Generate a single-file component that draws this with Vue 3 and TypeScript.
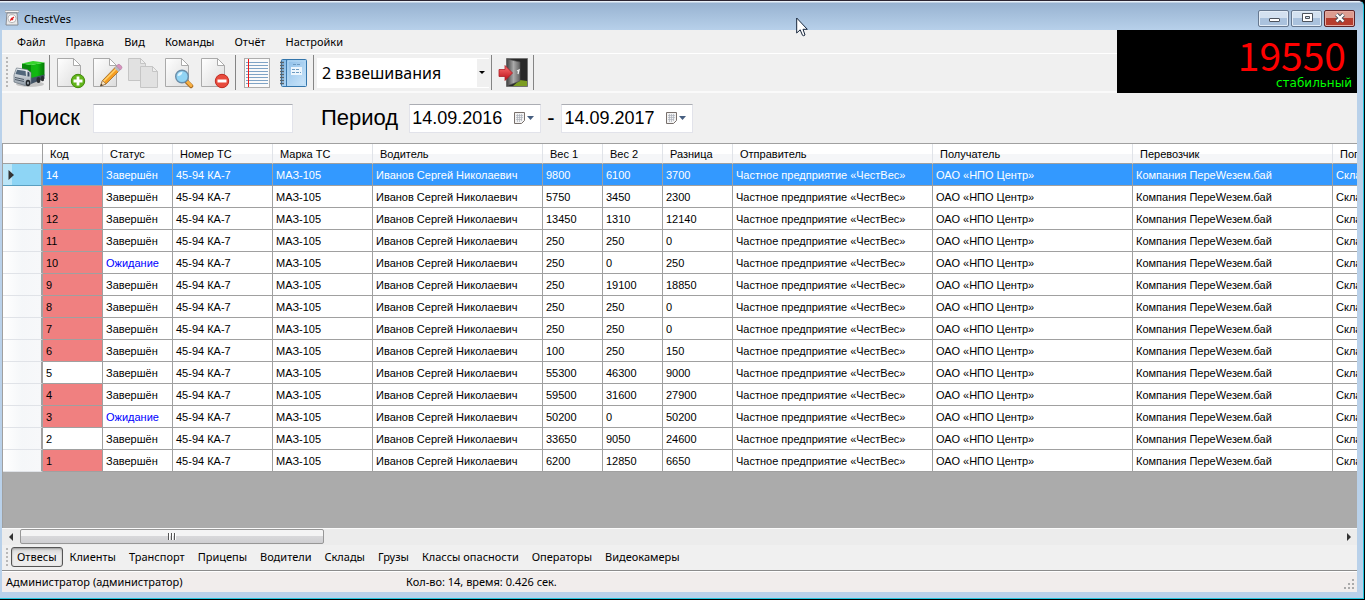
<script setup lang="ts">
import { ref } from 'vue'

interface Weighing {
  id: number
  status: string
  first: number
  second: number
  diff: number
  flagged: boolean
}

const menu = ['Файл', 'Правка', 'Вид', 'Команды', 'Отчёт', 'Настройки']
const columns = [
  'Код', 'Статус', 'Номер ТС', 'Марка ТС', 'Водитель', 'Вес 1', 'Вес 2',
  'Разница', 'Отправитель', 'Получатель', 'Перевозчик', 'Погрузка',
]
const tabs = [
  'Отвесы', 'Клиенты', 'Транспорт', 'Прицепы', 'Водители', 'Склады',
  'Грузы', 'Классы опасности', 'Операторы', 'Видеокамеры',
]

const done = 'Завершён'
const waiting = 'Ожидание'
const rows: Weighing[] = [
  { id: 14, status: done, first: 9800, second: 6100, diff: 3700, flagged: false },
  { id: 13, status: done, first: 5750, second: 3450, diff: 2300, flagged: true },
  { id: 12, status: done, first: 13450, second: 1310, diff: 12140, flagged: true },
  { id: 11, status: done, first: 250, second: 250, diff: 0, flagged: true },
  { id: 10, status: waiting, first: 250, second: 0, diff: 250, flagged: true },
  { id: 9, status: done, first: 250, second: 19100, diff: 18850, flagged: true },
  { id: 8, status: done, first: 250, second: 250, diff: 0, flagged: true },
  { id: 7, status: done, first: 250, second: 250, diff: 0, flagged: true },
  { id: 6, status: done, first: 100, second: 250, diff: 150, flagged: true },
  { id: 5, status: done, first: 55300, second: 46300, diff: 9000, flagged: false },
  { id: 4, status: done, first: 59500, second: 31600, diff: 27900, flagged: true },
  { id: 3, status: waiting, first: 50200, second: 0, diff: 50200, flagged: true },
  { id: 2, status: done, first: 33650, second: 9050, diff: 24600, flagged: false },
  { id: 1, status: done, first: 6200, second: 12850, diff: 6650, flagged: true },
]

const selected = ref(14)
const activeTab = ref('Отвесы')
const query = ref('')
const dateFrom = ref('14.09.2016')
const dateTo = ref('14.09.2017')
const mode = ref('2 взвешивания')
</script>

<template>
  <div class="window">
    <header class="titlebar">
      <svg class="app-icon" viewBox="0 0 14 16" aria-hidden="true">
        <path d="M0 .5h14v2H0z" fill="#f4f4f4" stroke="#8a8f96" stroke-width=".6" />
        <path d="M2 3h10l1 12H1z" fill="#e9e9ea" stroke="#77797d" stroke-width=".8" />
        <circle cx="7" cy="8.7" r="4" fill="#fff" stroke="#999" stroke-width=".7" />
        <path d="m5.2 10.6 3.6-3.6M6 8l2 2" stroke="#e02020" stroke-width="1.4" />
      </svg>
      <span class="title">ChestVes</span>
      <div class="window-buttons">
        <button type="button" aria-label="Свернуть">
          <svg viewBox="0 0 14 12"><rect x="2.5" y="6.5" width="10" height="3" rx=".5" fill="#fff" stroke="#4c535d" /></svg>
        </button>
        <button type="button" aria-label="Развернуть">
          <svg viewBox="0 0 14 12"><path d="M2.5 1.5h10v8h-10zM5.500 4.500v2h4v-2z" fill="#fff" fill-rule="evenodd" stroke="#4c535d" /></svg>
        </button>
        <button type="button" class="close" aria-label="Закрыть">
          <svg viewBox="0 0 14 12"><path d="m3.500 2.500 7 7m0-7-7 7" stroke="#4c535d" stroke-width="4" /><path d="m3.500 2.500 7 7m0-7-7 7" stroke="#fff" stroke-width="2.300" /></svg>
        </button>
      </div>
    </header>

    <div class="client">
      <div class="top">
        <div class="commands">
          <nav class="menu">
            <button v-for="item in menu" :key="item" type="button">{{ item }}</button>
          </nav>
          <div class="toolbar">
            <span class="grip"></span>
            <button type="button" class="tool" aria-label="Взвешивание">
              <svg viewBox="0 0 32 32">
                <defs>
                  <linearGradient id="cargo" x2="1"><stop stop-color="#12b312" /><stop offset=".45" stop-color="#10bb10" /><stop offset="1" stop-color="#057a08" /></linearGradient>
                  <linearGradient id="cab" y2="1" x2="0"><stop stop-color="#f7fafc" /><stop offset="1" stop-color="#8f9aa5" /></linearGradient>
                </defs>
                <ellipse cx="17" cy="27" rx="14" ry="3" fill="#000" opacity=".18" />
                <path d="M9 6.500 18 8v15l-9-4z" fill="#078a0a" />
                <path d="m18 8 13.500-2.500v13L18 23z" fill="url(#cargo)" />
                <path d="m9 6.500 11-2.500 11.500 1.500L18 8z" fill="#35d42c" />
                <path d="M18 23v-2l13.500-3.500v4L18 27z" fill="#405264" />
                <path d="m1 18 2.500-7L14 12.500l4 3V27l-6 1.500L1 25z" fill="url(#cab)" stroke="#65717d" stroke-width=".7" />
                <path d="m2.500 17 1.600-4.300 8.500 1.200.4 5z" fill="#52677b" />
                <path d="m14.500 14.500 2 1v4h-2z" fill="#364b61" />
                <path d="m2 20.500 9 2m-9 0 9 2" stroke="#4d5966" />
                <ellipse cx="15" cy="26" rx="2.300" ry="3.200" fill="#23272b" /><ellipse cx="15" cy="26" rx=".9" ry="1.500" fill="#aab2b9" />
                <ellipse cx="25.500" cy="23" rx="2" ry="3" fill="#292d31" /><ellipse cx="29.500" cy="21.500" rx="1.700" ry="2.700" fill="#292d31" />
              </svg>
            </button>
            <span class="separator"></span>
            <button type="button" class="tool" aria-label="Добавить">
              <svg viewBox="0 0 32 32">
                <defs>
                  <linearGradient id="paper" x2="1" y2="1"><stop stop-color="#fff" /><stop offset="1" stop-color="#dcdcdc" /></linearGradient>
                </defs>
                <path d="M2.500 1.500h16l7 7v21h-23z" fill="url(#paper)" stroke="#aaa" />
                <path d="M18.500 1.500v7h7z" fill="#fff" stroke="#aaa" />
                <circle cx="23" cy="24" r="6.700" fill="#62b51b" stroke="#438a0d" />
                <path d="M23 19.500v9M18.500 24h9" stroke="#fff" stroke-width="2.800" />
              </svg>
            </button>
            <button type="button" class="tool" aria-label="Изменить">
              <svg viewBox="0 0 32 32">
                <path d="M2.500 1.500h16l7 7v21h-23z" fill="url(#paper)" stroke="#aaa" />
                <path d="M18.500 1.500v7h7z" fill="#fff" stroke="#aaa" />
                <path d="m9.500 29 2-5.500L25 9.500l4 3.500-14 14z" fill="#f59d22" stroke="#9b6824" stroke-width=".8" />
                <path d="m12.500 24.500 13-13" stroke="#ffd36f" stroke-width="1.500" />
                <path d="m9.500 29 2-5.500 3.500 3.500z" fill="#f5dfba" stroke="#866646" stroke-width=".6" />
                <path d="m9.500 29 .8-2.200 1.400 1.400z" fill="#333" />
                <path d="m23.500 11 2-2 4 4-2 2z" fill="#b5bac4" />
                <path d="m25.500 9 1.300-1.400q1.200-.8 2.500.4l1 1q1.300 1.500.3 2.500L29.500 13z" fill="#d893bd" stroke="#a46e99" stroke-width=".5" />
              </svg>
            </button>
            <button type="button" class="tool" aria-label="Копировать" disabled>
              <svg viewBox="0 0 32 32" fill="#e1e1e1" stroke="#c5c5c5">
                <path d="M1.500 1.500h12l5 5v17h-17z" /><path d="M13.500 1.500v5h5z" fill="#eee" />
                <path d="M13.500 9.500h12l5 5v16h-17z" /><path d="M25.500 9.500v5h5z" fill="#eee" />
              </svg>
            </button>
            <button type="button" class="tool" aria-label="Просмотр">
              <svg viewBox="0 0 32 32">
                <path d="M2.500 1.500h16l7 7v21h-23z" fill="url(#paper)" stroke="#aaa" />
                <path d="M18.500 1.500v7h7z" fill="#fff" stroke="#aaa" />
                <path d="m24 25 4 4" stroke="#a96b20" stroke-width="4.500" stroke-linecap="round" /><path d="m24.500 25 3.500 3.500" stroke="#f8b042" stroke-width="3" stroke-linecap="round" />
                <circle cx="19" cy="19.500" r="6.300" fill="#91d4f4" stroke="#6a8da8" stroke-width="1.400" />
                <path d="M14.500 19q.5-4 5-4.300Q19 19 14.500 19z" fill="#def5ff" />
              </svg>
            </button>
            <button type="button" class="tool" aria-label="Удалить">
              <svg viewBox="0 0 32 32">
                <path d="M2.500 1.500h16l7 7v21h-23z" fill="url(#paper)" stroke="#aaa" />
                <path d="M18.500 1.500v7h7z" fill="#fff" stroke="#aaa" />
                <circle cx="23" cy="24" r="6.700" fill="#e84b3d" stroke="#c02b22" />
                <path d="M18.500 24h9" stroke="#fff" stroke-width="3" />
              </svg>
            </button>
            <span class="separator"></span>
            <button type="button" class="tool" aria-label="Журнал">
              <svg viewBox="0 0 32 32">
                <rect x="3.500" y="1.500" width="25" height="29" fill="#fafafa" stroke="#adadad" />
                <path d="M5 5.500h22M5 8.500h22M5 11.500h22M5 14.500h22M5 17.500h22M5 20.500h22M5 23.500h22M5 26.500h22" stroke="#7fa3c5" />
                <path d="M7.500 2v28" stroke="#f01515" />
              </svg>
            </button>
            <button type="button" class="tool" aria-label="Справочник">
              <svg viewBox="0 0 32 32">
                <defs><linearGradient id="book" x2="1" y2="1"><stop stop-color="#82b8e6" /><stop offset="1" stop-color="#d0e8fb" /></linearGradient></defs>
                <rect x="4.500" y="2.500" width="25" height="27" rx="1" fill="url(#book)" stroke="#3375ab" />
                <path d="M9.500 3v26" stroke="#3b79ae" /><path d="M11 4h17v24H11z" fill="none" stroke="#b6daf5" />
                <path d="M14 10h11v8H14z" fill="#edf6fd" />
                <path d="M16 7.500h7M15 12.500h8M15 15.500h9" stroke="#6c9ac1" stroke-dasharray="3 1" />
                <path d="M3 5.500h4M3 8.500h4M3 11.500h4M3 14.500h4M3 17.500h4M3 20.500h4M3 23.500h4M3 26.500h4" stroke="#59636b" stroke-width="1.400" />
              </svg>
            </button>
            <span class="separator"></span>
            <span class="combo">
              <select v-model="mode" aria-label="Режим взвешивания">
                <option>2 взвешивания</option>
                <option>1 взвешивание</option>
              </select>
            </span>
            <span class="separator"></span>
            <button type="button" class="tool" aria-label="Выход">
              <svg viewBox="0 0 32 32">
                <defs>
                  <linearGradient id="door" x2="1"><stop stop-color="#444" /><stop offset=".5" stop-color="#aaa" /><stop offset="1" stop-color="#626262" /></linearGradient>
                  <linearGradient id="arrow" y2="1" x2="0"><stop stop-color="#ff7474" /><stop offset="1" stop-color="#b80d16" /></linearGradient>
                </defs>
                <path d="M9.500 1.500h21v28h-21z" fill="#292929" stroke="#747474" />
                <path d="m16 29 7-6 7 1v5z" fill="#7c9d22" />
                <path d="m10 2 13 3v19l-13 5z" fill="url(#door)" stroke="#555" stroke-width=".6" />
                <path d="m20 14 2-1-1 4" fill="none" stroke="#eee" stroke-width="1.300" />
                <path d="M2 12.500h6V8.500l7.500 7.500L8 23.500v-4H2z" fill="url(#arrow)" stroke="#ad2027" stroke-width=".8" />
              </svg>
            </button>
            <span class="separator"></span>
          </div>
        </div>
        <output class="scale">
          <span class="weight">19550</span>
          <span class="state">стабильный</span>
        </output>
      </div>

      <form class="filters" @submit.prevent>
        <label for="search">Поиск</label>
        <input id="search" v-model="query" class="search" type="text">
        <label for="from">Период</label>
        <span class="date">
          <input id="from" v-model="dateFrom" type="text">
          <button type="button" aria-label="Выбрать начало периода">
            <svg viewBox="0 0 20 12"><path d="M.5.5h10v8l-3 3h-7z" fill="#f2f2f2" stroke="#776f6b" /><path d="M2 3.500h7M2 5.500h7M2 7.500h6M3.500 2v8M5.500 2v8M7.500 2v7" stroke="#aab0ba" stroke-width=".7" /><path d="M13 4h7l-3.500 4z" fill="#465e80" /></svg>
          </button>
        </span>
        <span class="dash">-</span>
        <span class="date">
          <input v-model="dateTo" type="text" aria-label="Конец периода">
          <button type="button" aria-label="Выбрать конец периода">
            <svg viewBox="0 0 20 12"><path d="M.5.5h10v8l-3 3h-7z" fill="#f2f2f2" stroke="#776f6b" /><path d="M2 3.500h7M2 5.500h7M2 7.500h6M3.500 2v8M5.500 2v8M7.500 2v7" stroke="#aab0ba" stroke-width=".7" /><path d="M13 4h7l-3.500 4z" fill="#465e80" /></svg>
          </button>
        </span>
      </form>

      <main class="grid">
        <table>
          <colgroup>
            <col class="w-head"><col class="w-small"><col class="w-status"><col class="w-medium"><col class="w-medium">
            <col class="w-driver"><col class="w-small"><col class="w-small"><col class="w-status">
            <col class="w-wide"><col class="w-wide"><col class="w-wide"><col class="w-wide">
          </colgroup>
          <thead>
            <tr>
              <th aria-label="Строка"></th>
              <th v-for="column in columns" :key="column" scope="col">{{ column }}</th>
            </tr>
          </thead>
          <tbody>
            <tr v-for="row in rows" :key="row.id" :class="{ selected: row.id === selected }" @click="selected = row.id">
              <th scope="row">
                <svg v-if="row.id === selected" viewBox="0 0 6 10" aria-label="Текущая строка"><path d="M.5 0 6 5 .5 10z" fill="#333" /></svg>
              </th>
              <td :class="{ flagged: row.flagged }">{{ row.id }}</td>
              <td :class="{ waiting: row.status === waiting }">{{ row.status }}</td>
              <td>45-94 КА-7</td>
              <td>МАЗ-105</td>
              <td>Иванов Сергей Николаевич</td>
              <td>{{ row.first }}</td>
              <td>{{ row.second }}</td>
              <td>{{ row.diff }}</td>
              <td>Частное предприятие «ЧестВес»</td>
              <td>ОАО «НПО Центр»</td>
              <td>Компания ПереWезем.бай</td>
              <td>Склад</td>
            </tr>
          </tbody>
        </table>
      </main>

      <div class="scrollbar">
        <button type="button" aria-label="Влево"><svg viewBox="0 0 4 8"><path d="M4 0v8L0 4z" fill="#333" /></svg></button>
        <div class="track"><div class="thumb"><i></i><i></i><i></i></div></div>
        <button type="button" aria-label="Вправо"><svg viewBox="0 0 4 8"><path d="M0 0v8l4-4z" fill="#333" /></svg></button>
      </div>

      <nav class="tabs">
        <span class="grip"></span>
        <button v-for="tab in tabs" :key="tab" type="button" :class="{ active: tab === activeTab }" @click="activeTab = tab">{{ tab }}</button>
      </nav>

      <footer class="status">
        <span class="user">Администратор (администратор)</span>
        <span>Кол-во: 14, время: 0.426 сек.</span>
        <svg class="resize" viewBox="0 0 11 11" fill="#aaa"><path d="M8 0h2v2H8zM8 4h2v2H8zM8 8h2v2H8zM4 4h2v2H4zM4 8h2v2H4zM0 8h2v2H0z" /></svg>
      </footer>
    </div>

    <svg class="pointer" viewBox="0 0 12 20" aria-hidden="true"><path d="M.7 1v15l3.500-3.200 2.300 5.500q1 1 2.500-.3L7 12.300h4.300z" fill="#fff" stroke="#17263c" /></svg>
  </div>
</template>

<style>
body {
  background: #000;
}
</style>

<style scoped>
* {
  box-sizing: border-box;
}

.window {
  position: relative;
  display: flex;
  flex-direction: column;
  min-height: calc(100vh - 1px);
  margin-right: 1px;
  padding: 0 6px 6px 2px;
  background: #b9d1ea;
  border-top: 1px solid #2c2633;
  border-right: 1px solid #22c4dc;
  border-bottom: 1px solid #22c4dc;
  border-radius: 0 6px 0 0;
  font-family: "Noto Sans", "Open Sans", sans-serif;
  font-size: 11px;
  color: #000;
}

button,
input,
select {
  margin: 0;
  padding: 0;
  font: inherit;
  color: inherit;
  background: none;
  border: 0;
}

.titlebar {
  display: flex;
  align-items: center;
  height: 29px;
  margin: 0 -6px 0 -2px;
  padding: 5px 8px 0 5px;
  background: linear-gradient(#e8f0f8 0 1px, #98b3d1 2px, #b7d0ea);
  border-radius: 0 5px 0 0;
}

.app-icon {
  width: 14px;
  height: 16px;
}

.title {
  margin-left: 5px;
}

.window-buttons {
  display: flex;
  gap: 2px;
  margin-left: auto;
}

.window-buttons button {
  display: grid;
  place-items: center;
  width: 31px;
  height: 17px;
  background: linear-gradient(#d3e1f0 50%, #aac2dd 50%);
  border: 1px solid #66788f;
  border-radius: 2px;
  box-shadow: inset 0 0 0 1px #e3edf7;
}

.window-buttons svg {
  width: 14px;
  height: 12px;
}

.window-buttons .close {
  background: linear-gradient(#dc9c90 50%, #b63d2e 50%);
  border-color: #5c2429;
  box-shadow: inset 0 0 0 1px #e6aaa0;
}

.client {
  display: flex;
  flex: 1;
  flex-direction: column;
  min-width: 0;
  background: #f0f0f0;
}

.top {
  display: flex;
}

.commands {
  flex: 1;
  min-width: 0;
}

.menu {
  display: flex;
  align-items: center;
  height: 23px;
  padding-left: 5px;
}

.menu button {
  height: 20px;
  padding: 0 10px;
}

.toolbar {
  display: flex;
  align-items: center;
  height: 40px;
  padding-left: 4px;
  border-top: 1px solid #fff;
  border-bottom: 2px solid #fafafa;
}

.grip {
  flex: none;
  width: 2px;
  height: 32px;
  margin-right: 3px;
  background: repeating-linear-gradient(#b8b8b8 0 2px, transparent 2px 4px);
}

.tool {
  display: grid;
  place-items: center;
  flex: none;
  width: 36px;
  height: 36px;
}

.tool svg {
  width: 32px;
  height: 32px;
}

.separator {
  flex: none;
  width: 1px;
  height: 35px;
  margin: 0 3px 0 2px;
  background: #858585;
}

.combo {
  display: flex;
  align-items: center;
  width: 172px;
  height: 30px;
  background: #fff;
}

.combo::after {
  width: 0;
  margin: 0 4px 0 -10px;
  border: 3px solid transparent;
  border-top-color: #000;
  border-bottom-width: 0;
  content: "";
  pointer-events: none;
}

.combo select {
  flex: 1;
  height: 30px;
  padding-left: 5px;
  font-size: 16px;
  appearance: none;
  background: linear-gradient(#f0f0f0, #f0f0f0) right / 12px 28px no-repeat;
}

.scale {
  display: flex;
  flex-direction: column;
  align-items: flex-end;
  width: 240px;
  height: 63px;
  padding: 2px 5px 0 0;
  background: #000;
}

.weight {
  padding-right: 6px;
  font: 39px/44px "Noto Sans CJK SC", sans-serif;
  color: #f00;
}

.state {
  font: 12px/14px "DejaVu Sans", sans-serif;
  color: #0f0;
}

.filters {
  display: flex;
  align-items: center;
  height: 50px;
  padding-left: 17px;
  font-family: "Liberation Sans", sans-serif;
  font-size: 22px;
}

.search,
.date {
  height: 29px;
  background: #fff;
  border: 1px solid #e2e3ea;
  border-top-color: #abadb3;
}

.search {
  width: 200px;
  margin: 0 28px 0 13px;
}

.date {
  display: flex;
  align-items: center;
  width: 132px;
  margin-left: 11px;
}

.date input {
  flex: 1;
  min-width: 0;
  height: 27px;
  padding-left: 2px;
  font-size: 18px;
}

.date button {
  width: 20px;
  height: 12px;
  margin-right: 6px;
}

.date svg {
  display: block;
  width: 20px;
  height: 12px;
}

.dash {
  margin-left: 6px;
}

.dash + .date {
  margin-left: 7px;
}

.grid {
  flex: 1;
  min-width: 0;
  overflow: hidden;
  background: #ababab;
  border-top: 1px solid #a0a0a0;
  border-left: 1px solid #a0a0a0;
}

table {
  width: 1530px;
  table-layout: fixed;
  border-spacing: 0;
  font-family: "Liberation Sans", sans-serif;
  font-size: 11px;
}

.w-head { width: 40px; }
.w-small { width: 60px; }
.w-status { width: 70px; }
.w-medium { width: 100px; }
.w-driver { width: 170px; }
.w-wide { width: 200px; }

th,
td {
  height: 22px;
  padding: 0 3px;
  overflow: hidden;
  text-align: left;
  font-weight: 400;
  white-space: nowrap;
  background: #fff;
  border-right: 1px solid #a0a0a0;
  border-bottom: 1px solid #a0a0a0;
}

thead th {
  height: 20px;
  padding: 0 7px;
  background: linear-gradient(#fff 50%, #f5f6f8 50%);
  border-right-color: #e0e3e8;
}

thead th:first-child {
  border-right-color: #a0a0a0;
}

tbody th {
  padding: 0 0 0 5px;
  background: linear-gradient(90deg, #fff 0, #f5f7f9 50%, #f7f8fa);
  border-right: 2px solid #a0a0a0;
  border-bottom-color: #e0e3e8;
}

tbody th svg {
  display: block;
  width: 6px;
  height: 10px;
}

.flagged {
  background: #f08080;
}

.waiting {
  color: #00f;
}

.selected td {
  color: #fff;
  background: #3399ff;
}

.selected th {
  background: linear-gradient(90deg, #bce6f8 0 9px, #8ed5f5 9px);
  border-bottom-color: #5a9fc0;
}

.scrollbar {
  display: flex;
  height: 17px;
  background: #ececec;
  border-top: 1px solid #fafafa;
}

.scrollbar button {
  display: grid;
  place-items: center;
  width: 17px;
}

.scrollbar button svg {
  width: 4px;
  height: 8px;
}

.track {
  flex: 1;
  padding-left: 1px;
}

.thumb {
  display: flex;
  align-items: center;
  justify-content: center;
  gap: 1px;
  width: 23%;
  height: 15px;
  background: linear-gradient(#f4f4f4 50%, #d8d8da 50%, #cfcfd2);
  border: 1px solid #979797;
  border-radius: 2px;
}

.thumb i {
  width: 2px;
  height: 7px;
  background: linear-gradient(90deg, #555 50%, #fff 50%);
}

.tabs {
  display: flex;
  gap: 1px;
  align-items: center;
  height: 25px;
  padding: 0 0 2px 4px;
}

.tabs .grip {
  height: 18px;
  margin-right: 2px;
}

.tabs button {
  height: 20px;
  padding: 0 5px;
  border: 1px solid transparent;
  border-radius: 3px;
}

.tabs .active {
  background: linear-gradient(#d5d5d5, #ececec 40%);
  border-color: #555;
  box-shadow: inset 0 1px 2px #999;
}

.status {
  display: flex;
  align-items: center;
  height: 22px;
  padding: 0 2px 0 4px;
  background: #f1edec;
  border-top: 1px solid #8c8c8c;
  box-shadow: inset 0 1px #fff;
}

.user {
  width: 400px;
}

.resize {
  width: 11px;
  height: 11px;
  margin: 6px 0 0 auto;
}

.pointer {
  position: absolute;
  top: 16px;
  left: 796px;
  width: 12px;
  height: 20px;
}
</style>
